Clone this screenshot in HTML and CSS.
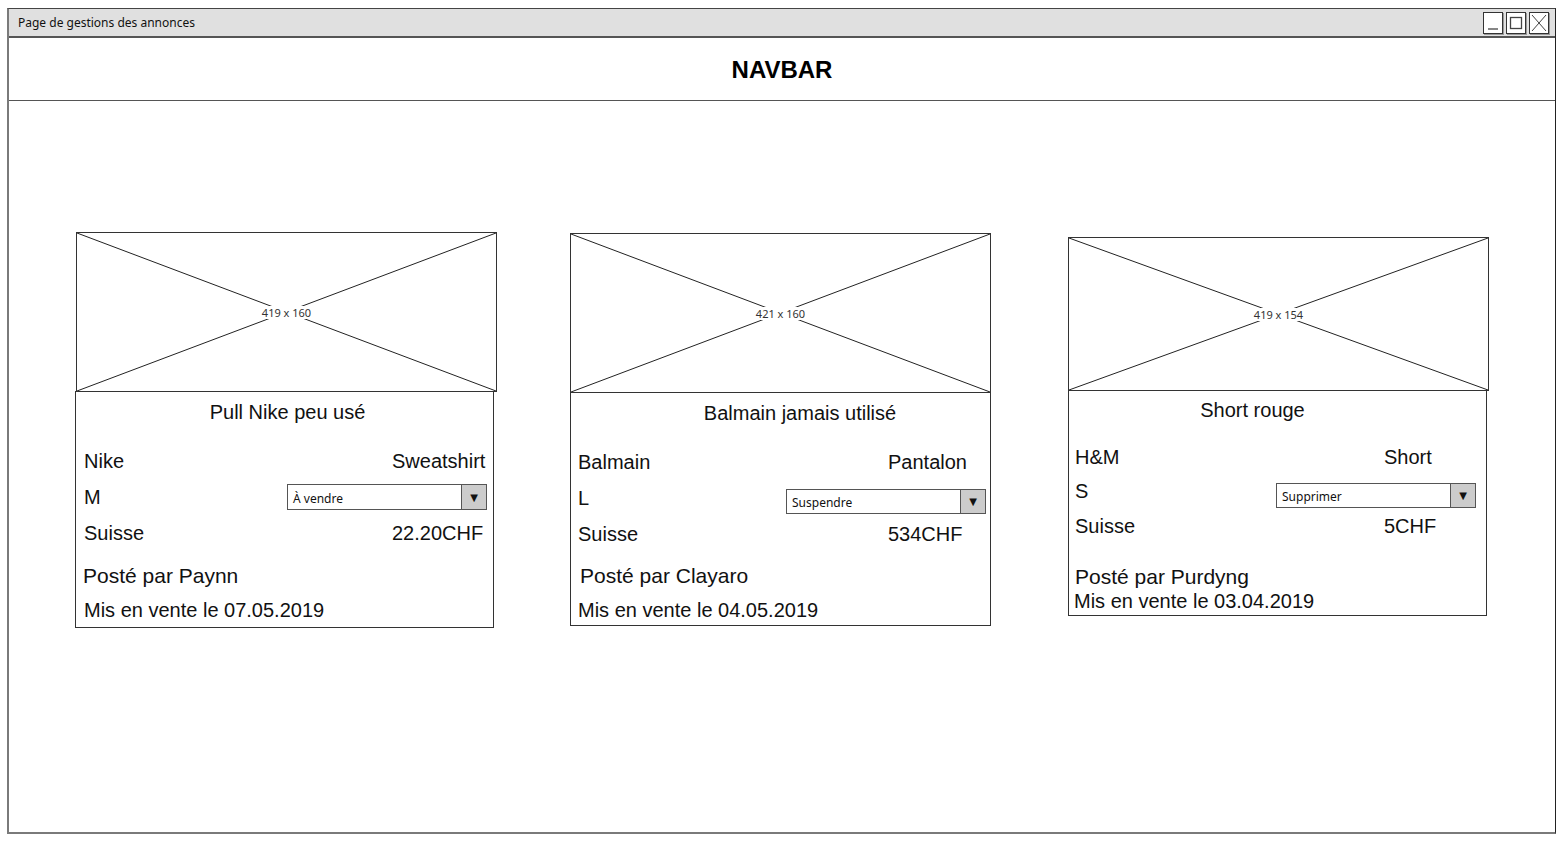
FILE: index.html
```html
<!DOCTYPE html>
<html lang="fr">
<head>
<meta charset="utf-8">
<title>Page de gestions des annonces</title>
<link rel="stylesheet" href="styles.css">
</head>
<body>
<div class="window">
  <div class="titlebar">
    <span class="titlebar__text">Page de gestions des annonces</span>
    <div class="titlebar__buttons">
      <span class="winbtn"><svg viewBox="0 0 20 22" width="20" height="22"><line x1="5" y1="17" x2="15" y2="17" stroke="#444" stroke-width="1.3"/></svg></span>
      <span class="winbtn"><svg viewBox="0 0 20 22" width="20" height="22"><rect x="4.5" y="5.5" width="11" height="11" fill="none" stroke="#444" stroke-width="1.3"/></svg></span>
      <span class="winbtn"><svg viewBox="0 0 20 22" width="20" height="22"><path d="M3 3 L17 19 M17 3 L3 19" stroke="#444" stroke-width="1"/></svg></span>
    </div>
  </div>
  <div class="navbar">NAVBAR</div>
  <main class="content">
    <article class="card card--a">
      <div class="placeholder">
        <svg class="placeholder__x" viewBox="0 0 100 100" preserveAspectRatio="none"><path d="M0 0 L100 100 M100 0 L0 100" stroke="#222" stroke-width="1" vector-effect="non-scaling-stroke"/></svg>
        <span class="placeholder__label">419 x 160</span>
      </div>
      <div class="card__body">
        <div class="card__title">Pull Nike peu usé</div>
        <div class="card__rows">
          <div class="row"><span class="row__left">Nike</span><span class="row__right">Sweatshirt</span></div>
          <div class="row row--select"><span class="row__left">M</span>
            <div class="select"><span class="select__text">À vendre</span><span class="select__arrow">▼</span></div>
          </div>
          <div class="row"><span class="row__left">Suisse</span><span class="row__right">22.20CHF</span></div>
        </div>
        <div class="card__meta">
          <div class="meta meta--author">Posté par Paynn</div>
          <div class="meta">Mis en vente le 07.05.2019</div>
        </div>
      </div>
    </article>

    <article class="card card--b">
      <div class="placeholder">
        <svg class="placeholder__x" viewBox="0 0 100 100" preserveAspectRatio="none"><path d="M0 0 L100 100 M100 0 L0 100" stroke="#222" stroke-width="1" vector-effect="non-scaling-stroke"/></svg>
        <span class="placeholder__label">421 x 160</span>
      </div>
      <div class="card__body card__body--b">
        <div class="card__title card__title--b">Balmain jamais utilisé</div>
        <div class="card__rows">
          <div class="row"><span class="row__left">Balmain</span><span class="row__right">Pantalon</span></div>
          <div class="row row--select"><span class="row__left">L</span>
            <div class="select select--low select--b"><span class="select__text">Suspendre</span><span class="select__arrow">▼</span></div>
          </div>
          <div class="row"><span class="row__left">Suisse</span><span class="row__right">534CHF</span></div>
        </div>
        <div class="card__meta card__meta--b">
          <div class="meta meta--author meta--shift">Posté par Clayaro</div>
          <div class="meta">Mis en vente le 04.05.2019</div>
        </div>
      </div>
    </article>

    <article class="card card--c">
      <div class="placeholder placeholder--short">
        <svg class="placeholder__x" viewBox="0 0 100 100" preserveAspectRatio="none"><path d="M0 0 L100 100 M100 0 L0 100" stroke="#222" stroke-width="1" vector-effect="non-scaling-stroke"/></svg>
        <span class="placeholder__label">419 x 154</span>
      </div>
      <div class="card__body card__body--c">
        <div class="card__title card__title--c">Short rouge</div>
        <div class="card__rows card__rows--c">
          <div class="row"><span class="row__left">H&amp;M</span><span class="row__right">Short</span></div>
          <div class="row row--select"><span class="row__left">S</span>
            <div class="select select--low select--c"><span class="select__text">Supprimer</span><span class="select__arrow">▼</span></div>
          </div>
          <div class="row"><span class="row__left">Suisse</span><span class="row__right">5CHF</span></div>
        </div>
        <div class="card__meta card__meta--c">
          <div class="meta meta--author meta--tight">Posté par Purdyng</div>
          <div class="meta meta--tight">Mis en vente le 03.04.2019</div>
        </div>
      </div>
    </article>
  </main>
</div>
</body>
</html>
```

FILE: styles.css
```css
* { box-sizing: border-box; }

html, body {
  margin: 0;
  padding: 0;
  background: #ffffff;
}

body {
  font-family: "Liberation Sans", Arial, sans-serif;
  color: #111;
}

.window {
  margin: 8px 0 0 7px;
  width: 1549px;
  height: 826px;
  border-top: 1px solid #444;
  border-left: 2px solid #7a7a7a;
  border-bottom: 2px solid #7a7a7a;
  border-right: 1px solid #222;
  display: flex;
  flex-direction: column;
  background: #fff;
}

.titlebar {
  height: 29px;
  flex: 0 0 29px;
  background: #e0e0e0;
  border-bottom: 2px solid #555;
  display: flex;
  align-items: center;
  justify-content: space-between;
  padding: 0 6px 0 9px;
}

.titlebar__text {
  font-family: "Noto Sans", "DejaVu Sans", sans-serif;
  font-size: 12px;
  color: #111;
}

.titlebar__buttons {
  display: flex;
  gap: 3px;
  margin-top: 1px;
}

.winbtn {
  width: 20px;
  height: 22px;
  background: #fff;
  border: 1px solid #333;
  box-shadow: 1px 1px 0 #999;
  display: block;
  position: relative;
}

.winbtn svg {
  position: absolute;
  left: -1px;
  top: -1px;
}

.navbar {
  height: 63px;
  flex: 0 0 63px;
  border-bottom: 1px solid #555;
  display: flex;
  align-items: center;
  justify-content: center;
  font-weight: bold;
  font-size: 24px;
  padding-top: 1px;
  color: #000;
}

.content {
  flex: 1;
  display: flex;
  align-items: flex-start;
  padding: 0 0 0 67px;
}

.card {
  width: 421px;
  display: flex;
  flex-direction: column;
}

.card--a { margin-top: 131px; }
.card--b { margin-top: 132px; margin-left: 73px; }
.card--c { margin-top: 136px; margin-left: 77px; }

.placeholder {
  position: relative;
  height: 160px;
  border: 1px solid #333;
  display: flex;
  align-items: center;
  justify-content: center;
  background: #fff;
}

.placeholder--short { height: 154px; }

.placeholder__x {
  position: absolute;
  left: 0;
  top: 0;
  width: 100%;
  height: 100%;
}

.placeholder__label {
  position: relative;
  background: #fff;
  font-family: "Noto Sans", "DejaVu Sans", sans-serif;
  font-size: 11px;
  color: #333;
  padding: 0 2px;
  line-height: 13px;
}

.card__body {
  width: 419px;
  margin-left: -1px;
  margin-top: -1px;
  border: 1px solid #333;
  padding: 0 0 0 8px;
}

.card__body--b { width: 421px; margin-left: 0; padding-left: 7px; }
.card__body--c { width: 419px; margin-left: 0; padding-left: 6px; }

.card__title {
  font-size: 20px;
  line-height: 24px;
  margin-top: 8px;
  text-align: center;
  padding-right: 2px;
  color: #111;
}

.card__title--b { padding-right: 0; padding-left: 32px; }
.card__title--c { margin-top: 7px; padding-right: 56px; }

.card__rows { margin-top: 19px; }
.card__rows--c { margin-top: 18px; }

.row {
  display: flex;
  align-items: center;
  height: 36px;
  font-size: 20px;
  color: #111;
}

.card__rows--c .row { height: 34.5px; }

.row__left {
  width: 308px;
  flex: 0 0 308px;
}

.card__body--b .row__left { width: 310px; flex-basis: 310px; }
.card__body--c .row__left { width: 309px; flex-basis: 309px; }

.row--select .row__left,
.card__body--b .row--select .row__left,
.card__body--c .row--select .row__left {
  flex: 1 1 auto;
  width: auto;
}

.row__right {
  white-space: nowrap;
}

.select {
  flex: 0 0 200px;
  margin-right: 6px;
  width: 200px;
  height: 26px;
  border: 1px solid #555;
  background: #fff;
  display: flex;
  align-items: stretch;
  font-family: "Noto Sans", "DejaVu Sans", sans-serif;
  font-size: 12px;
  color: #111;
}

.select--low { margin-top: 7px; height: 25px; }
.select--b { margin-right: 4px; }
.select--c { margin-right: 10px; }

.select__text {
  flex: 1;
  display: flex;
  align-items: center;
  padding-left: 5px;
  padding-top: 2px;
}

.select__arrow {
  width: 25px;
  flex: 0 0 25px;
  background: #cccccc;
  border-left: 1px solid #555;
  display: flex;
  align-items: center;
  justify-content: center;
  font-family: "DejaVu Sans", sans-serif;
  font-size: 10px;
  color: #111;
}

.card__meta { margin-top: 8px; }
.card__meta--b { margin-top: 7px; margin-bottom: -2px; }
.card__meta--c { margin-top: 21px; padding-bottom: 2px; }

.meta {
  font-size: 20px;
  line-height: 34px;
  color: #111;
  white-space: nowrap;
}

.meta--author {
  font-size: 21px;
  margin-left: -1px;
}

.meta--shift { margin-left: 2px; }

.meta--tight {
  line-height: 24px;
}

.card__meta--c .meta--author { margin-left: 0; }
.card__meta--c .meta:not(.meta--author) { margin-left: -1px; }
```
